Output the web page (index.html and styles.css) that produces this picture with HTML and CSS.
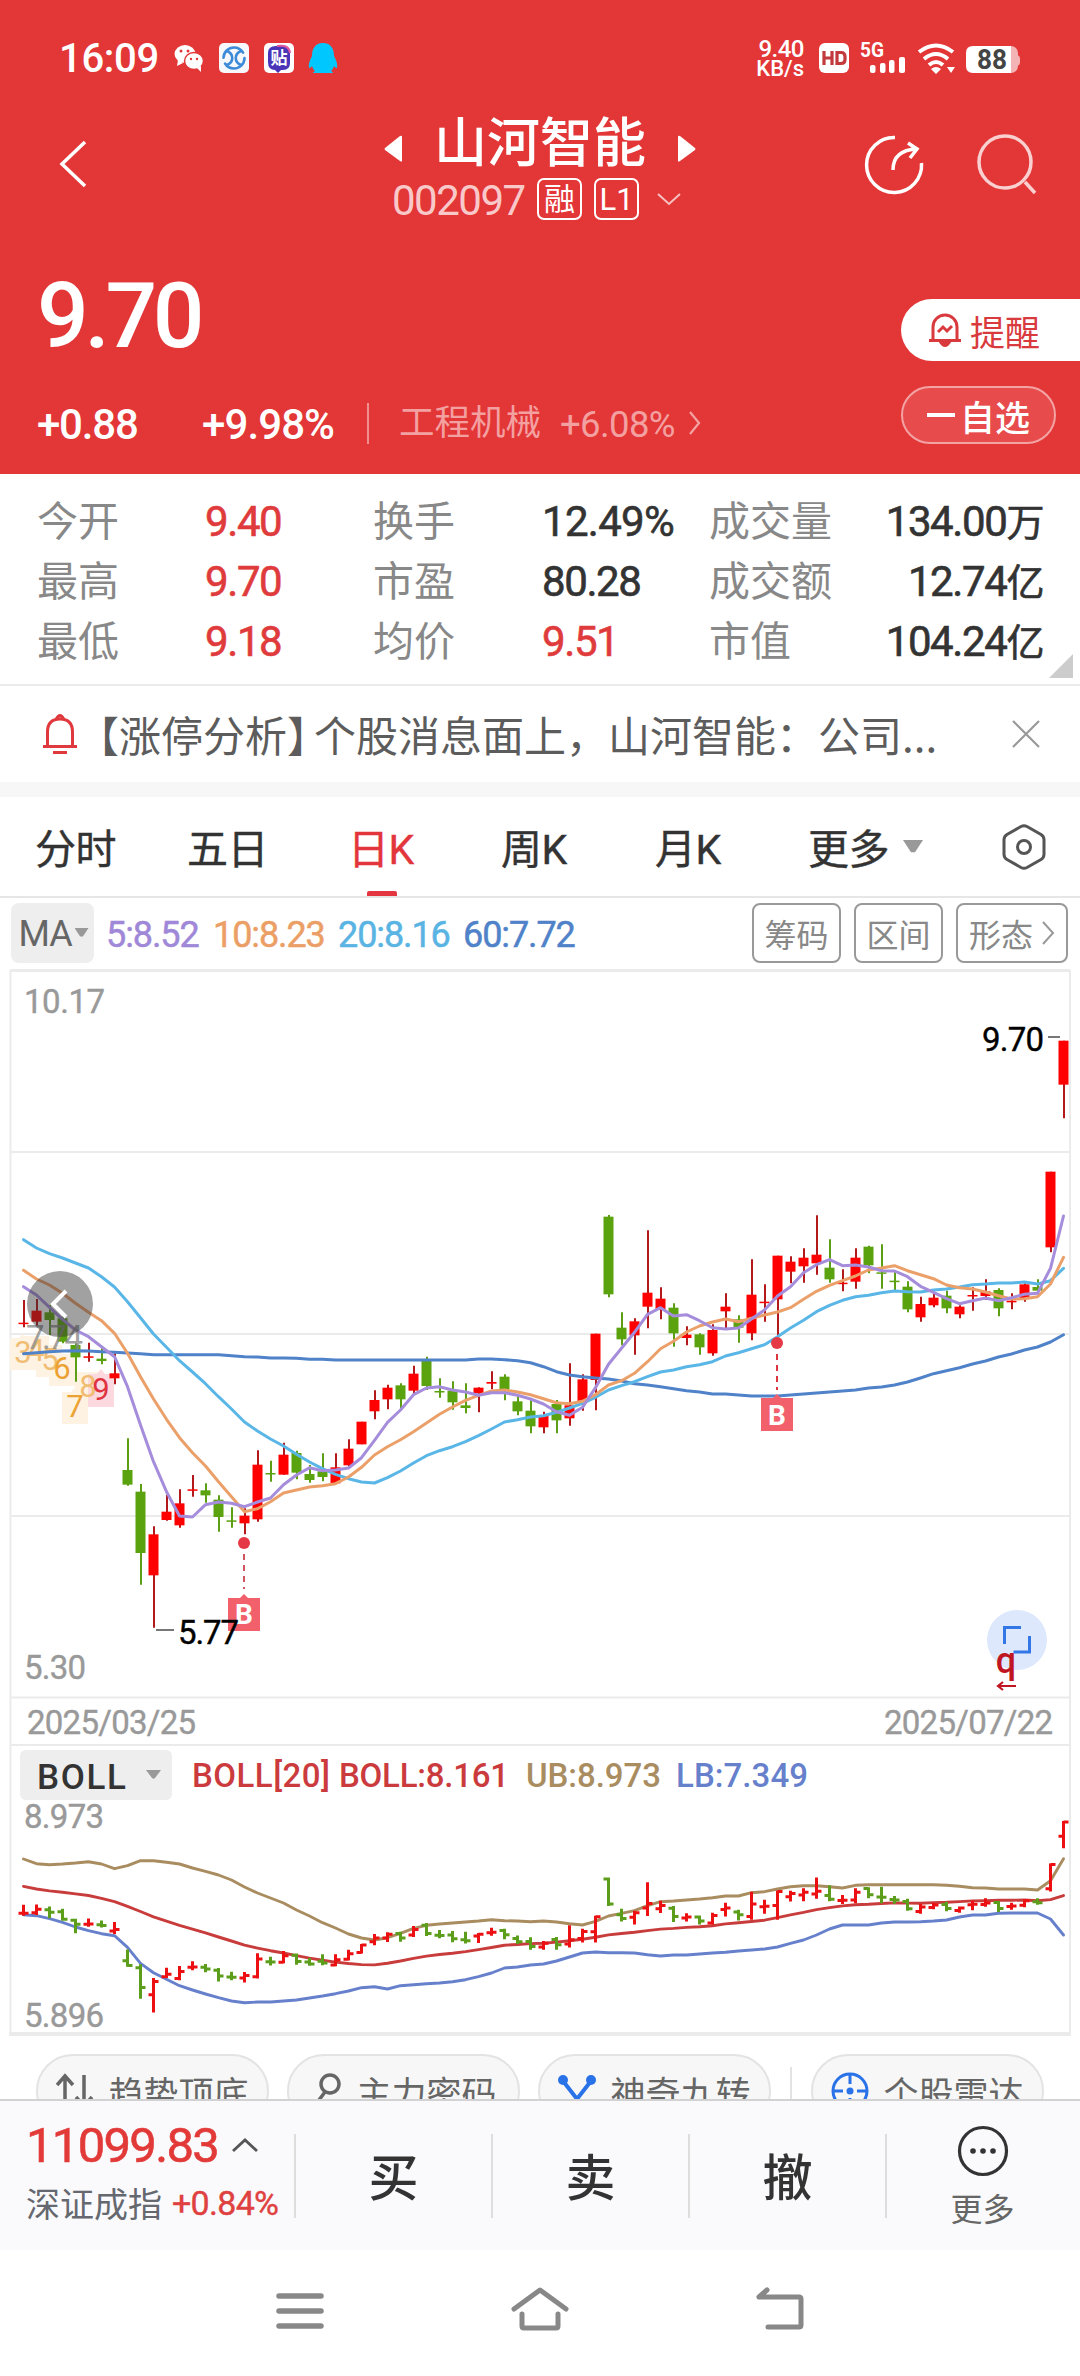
FILE: index.html
```html
<!DOCTYPE html>
<html lang="zh-CN">
<head>
<meta charset="utf-8">
<title>山河智能 002097</title>
<link rel="stylesheet" href="styles.css">
</head>
<body>
<header class="hero">
  <div class="status">
    <span class="clock">16:09</span>
    <svg class="apps" width="170" height="40" viewBox="170 38 170 40">
      <ellipse cx="185" cy="54" rx="10.500" ry="9" fill="#fff"/><path d="M178 60l-1 6 6-3z" fill="#fff"/>
      <ellipse cx="194" cy="61" rx="9.500" ry="8.500" fill="#fff" stroke="#e33637" stroke-width="1.500"/><path d="M197 68l4 4v-6z" fill="#fff"/>
      <g fill="#e33637"><circle cx="181" cy="51" r="1.500"/><circle cx="188" cy="51" r="1.500"/><circle cx="191" cy="59" r="1.200"/><circle cx="197" cy="59" r="1.200"/></g>
      <rect x="219" y="43" width="30" height="30" rx="5" fill="#f6f8fc"/>
      <g fill="none" stroke="#3d8bd8" stroke-width="2.600" stroke-linecap="round"><circle cx="234" cy="58" r="10.500" stroke-dasharray="27 6"/><path d="M227 51c7 3 7 11 0 14M241 51c-7 3-7 11 0 14"/></g>
      <rect x="264" y="43" width="30" height="30" rx="5" fill="#fff"/>
      <path d="M276 46h7q7 0 7 7v10q0 7-7 7h-2l-3 3-3-3q-7 0-7-8V53q0-7 8-7z" fill="#4a35b8"/><path d="M277 46q12-2 13 7" fill="none" stroke="#e0559f" stroke-width="2"/>
      <text x="279" y="64" class="tie">贴</text>
      <path d="M323 43c8 0 11 6 11 13 2 4 4 8 3 12-2 0-3-2-3-2-1 3-2 4-3 5 2 1 2 2 2 2h-20s0-1 2-2c-1-1-2-2-3-5 0 0-1 2-3 2-1-4 1-8 3-12 0-7 3-13 11-13z" fill="#00c8ff"/>
    </svg>
    <div class="speed"><span>9.40</span><span>KB/s</span></div>
    <svg class="signals" width="210" height="44" viewBox="815 36 210 44">
      <rect x="819" y="43" width="30" height="30" rx="6" fill="#fff"/>
      <g fill="none" stroke="#c23a3c" stroke-width="3.200"><path d="M824 51v14M832 51v14M824 58h8M837 52.500h4q4 0 4 4v3q0 4-4 4h-4z"/></g>
      <text x="860" y="57" class="fiveg" textLength="24" lengthAdjust="spacingAndGlyphs">5G</text>
      <g fill="#fff"><rect x="870" y="65" width="5.500" height="8" rx="2"/><rect x="880" y="63" width="5.500" height="10" rx="2"/><rect x="889" y="60" width="5.500" height="13" rx="2"/><rect x="899" y="57" width="6" height="16" rx="2"/></g>
      <g fill="none" stroke="#fff" stroke-width="4"><path d="M919 52q17-13 34 0M924 59q12-10 24 0M929 65q7-6 14 0"/></g>
      <path d="M931 69q5-4 10 0l-5 5zM947 67h8l-4 6z" fill="#fff"/>
      <path d="M1010 55h6q4 0 4 4v3q0 4-4 4h-6z" fill="#f4b3b4"/><rect x="990" y="46" width="28" height="27" rx="7" fill="#f4b3b4"/>
      <path d="M973 46h38v27h-38q-7 0-7-7v-13q0-7 7-7z" fill="#fff"/>
      <text x="977" y="69" class="batt" textLength="30" lengthAdjust="spacingAndGlyphs">88</text>
    </svg>
  </div>
  <div class="titlebar">
    <svg class="back" width="32" height="52" viewBox="0 0 32 52"><path d="M28 4L5 26l23 22" fill="none" stroke="#fff" stroke-width="3.500"/></svg>
    <div class="name">
      <div class="name-row">
        <svg width="18" height="28" viewBox="0 0 18 28"><path d="M18 2v24q0 1-2 0L1 15q-1-1 0-2L16 1q2-1 2 1z" fill="#fff"/></svg>
        <h1>山河智能</h1>
        <svg width="18" height="28" viewBox="0 0 18 28"><path d="M0 2v24q0 1 2 0l15-11q1-1 0-2L2 1Q0 0 0 2z" fill="#fff"/></svg>
      </div>
      <div class="code-row">
        <span class="code">002097</span><span class="badge">融</span><span class="badge">L1</span>
        <svg width="26" height="14" viewBox="0 0 26 14"><path d="M2 2l11 10L24 2" fill="none" stroke="#f7c0c1" stroke-width="2"/></svg>
      </div>
    </div>
    <svg class="tools" width="180" height="70" viewBox="860 130 180 70" fill="none">
      <path d="M895 137.500A27.500 27.500 0 1 0 921.500 163" stroke="#fff" stroke-width="3.500"/>
      <path d="M893 170q0-20 24-21M908 143l9 6-7 9" stroke="#fff" stroke-width="3.500"/>
      <circle cx="1005" cy="162" r="26" stroke="#f9cfcf" stroke-width="3.500"/><path d="M1025 182l10 11" stroke="#f9cfcf" stroke-width="3.500"/>
    </svg>
  </div>
  <div class="pricing">
    <div class="left">
      <div class="price">9.70</div>
      <div class="changes">
        <span class="chg">+0.88</span><span class="pct">+9.98%</span><i class="bar"></i>
        <span class="sector">工程机械</span><span class="sector-pct">+6.08%</span>
        <svg width="14" height="26" viewBox="0 0 14 26"><path d="M2 2l9 11-9 11" fill="none" stroke="#f3a3a4" stroke-width="2.200"/></svg>
      </div>
    </div>
    <div class="right">
      <div class="remind">
        <svg width="34" height="36" viewBox="0 0 34 36" fill="none" stroke="#d93a3d" stroke-width="3"><path d="M5 28V15a12 12 0 0 1 24 0v13M1 28.500h32"/><path d="M12 29q5 9 10 0" fill="#d93a3d"/><path d="M10 20l5-5 4 4 5-5"/></svg>
        <span>提醒</span>
      </div>
      <div class="watch"><i></i><span>自选</span></div>
    </div>
  </div>
</header>

<section class="quote">
  <span>今开</span><b class="up">9.40</b><span>换手</span><b class="turnover">12.49%</b><span>成交量</span><b class="end">134.00<em>万</em></b>
  <span>最高</span><b class="up">9.70</b><span>市盈</span><b>80.28</b><span>成交额</span><b class="end">12.74<em>亿</em></b>
  <span>最低</span><b class="up">9.18</b><span>均价</span><b class="up">9.51</b><span>市值</span><b class="end">104.24<em>亿</em></b>
  <i class="corner"></i>
</section>

<section class="notice">
  <svg width="34" height="42" viewBox="0 0 34 42" fill="none" stroke="#e0393d" stroke-width="3"><path d="M4.500 33V19q0-13 12.500-13t12.500 13v14M0 33.500h34M13 6.500q4-8 8 0"/><path d="M10 39.500h14"/></svg>
  <p>【涨停分析<span class="close-b">】</span>个股消息面上，山河智能：公司...</p>
  <svg class="x" width="30" height="30" viewBox="0 0 30 30"><path d="M2 2l26 26M28 2L2 28" stroke="#999" stroke-width="2.200"/></svg>
</section>

<nav class="tabs">
  <span>分时</span><span>五日</span><span class="on">日K</span><span>周K</span><span>月K</span><span>更多</span>
  <i class="tri"></i>
  <svg width="44" height="48" viewBox="0 0 44 48" fill="none" stroke="#555" stroke-width="3"><path d="M19 3.500q3-1.500 6 0l14 8q3 2 3 5v15q0 3-3 5l-14 8q-3 1.500-6 0l-14-8q-3-2-3-5v-15q0-3 3-5z"/><circle cx="22" cy="24" r="6.500"/></svg>
</nav>

<section class="ma">
  <div class="ma-btn">MA<i class="tri"></i></div>
  <span class="m5">5:8.52</span><span class="m10">10:8.23</span><span class="m20">20:8.16</span><span class="m60">60:7.72</span>
  <div class="ma-opts"><span>筹码</span><span>区间</span><span class="wide">形态<svg width="13" height="26" viewBox="0 0 13 26"><path d="M1 2l10 11L1 24" fill="none" stroke="#999" stroke-width="2"/></svg></span></div>
</section>

<svg class="chart" width="1080" height="1068" viewBox="0 968 1080 1068">
  <g fill="none" stroke="#ebebeb" stroke-width="2">
    <path d="M10 970.500h1060" stroke-width="3"/><path d="M10.500 970v1064M1070 970v1064M10 1152h1060M10 1334h1060M10 1516h1060M10 1697.500h1060M10 1745h1060"/><path d="M9 2034h1062" stroke-width="4"/>
  </g>
  <g class="axis">
    <text x="24" y="1013" textLength="81">10.17</text>
    <text x="24" y="1679" textLength="62">5.30</text>
    <text x="27" y="1734" textLength="169">2025/03/25</text>
    <text x="884" y="1734" textLength="169">2025/07/22</text>
    <text x="24" y="1828" textLength="80">8.973</text>
    <text x="24" y="2027" textLength="80">5.896</text>
  </g>
  <g class="tags">
    <g fill="#fef2e2"><path d="M10 1338l9 0 4-4 4 4h9v32H10zM23 1336h26v32H23zM36 1345h26v32H36zM49 1354h26v32H49zM62 1392h9l4-5 4 5h9v32H62zM75 1372h26v33H75z"/></g>
    <path d="M88 1374h9l4-5 4 5h9v33H88z" fill="#fbd9de"/>
    <g fill="#f0bd72"><text x="23" y="1363">3</text><text x="36" y="1361">4</text><text x="50" y="1370">5</text><text x="88" y="1397">8</text></g>
    <g fill="#eca233"><text x="62" y="1379">6</text><text x="75" y="1417">7</text></g>
    <text x="101" y="1400" fill="#e0333f">9</text>
  </g>
  <g id="candles"></g>
  <g id="averages" fill="none" stroke-width="3" stroke-linejoin="round" stroke-linecap="round"></g>
  <text x="26" y="1349" class="ghost" textLength="57">7.74</text>
  <circle cx="60" cy="1304" r="33" fill="#333" fill-opacity=".46"/>
  <path d="M66 1291l-13 13 13 13" fill="none" stroke="#fff" stroke-width="4"/>
  <g>
    <circle cx="244" cy="1543" r="6" fill="#e63946"/><path d="M244 1554v35" stroke="#cf5560" stroke-width="2" stroke-dasharray="6 5"/>
    <path d="M228 1598h12l4-4 4 4h12v33h-32z" fill="#f2606b"/><text x="244" y="1624" class="buy">B</text>
    <circle cx="777" cy="1343" r="6" fill="#e63946"/><path d="M777 1354v36" stroke="#dd3540" stroke-width="2" stroke-dasharray="6 5"/>
    <path d="M761 1398h12l4-4 4 4h12v33h-32z" fill="#f2606b"/><text x="777" y="1425" class="buy">B</text>
  </g>
  <g class="mark">
    <path d="M156 1630h18M1048 1037h12" stroke="#777" stroke-width="2"/>
    <text x="178" y="1644" textLength="61">5.77</text>
    <text x="982" y="1051" textLength="62">9.70</text>
  </g>
  <circle cx="1017" cy="1640" r="30" fill="#dde8fc"/>
  <path d="M1004.500 1644v-16.500h16.500M1029.500 1636v16h-16" fill="none" stroke="#3377e6" stroke-width="3"/>
  <text x="1006" y="1673" class="q">q</text>
  <path d="M1016 1686h-18M1003 1682l-5 4 5 4" fill="none" stroke="#c01622" stroke-width="2.200"/>
  <rect x="20" y="1750" width="152" height="50" rx="6" fill="#eee"/>
  <text x="37" y="1789" class="boll" textLength="89">BOLL</text>
  <path d="M146 1770h15l-6 8q-1.500 1.500-3 0z" fill="#999"/>
  <g class="legend">
    <text x="192" y="1787" fill="#cb3b3d" textLength="138">BOLL[20]</text>
    <text x="339" y="1787" fill="#cb3b3d" textLength="170">BOLL:8.161</text>
    <text x="526" y="1787" fill="#a98c5f" textLength="135">UB:8.973</text>
    <text x="676" y="1787" fill="#6680cc" textLength="132">LB:7.349</text>
  </g>
  <g id="bands" fill="none" stroke-width="2.900" stroke-linejoin="round" stroke-linecap="round"></g>
  <g id="bars" fill="none" stroke-width="3"></g>
</svg>

<section class="chips">
  <div class="chip"><svg width="38" height="36" viewBox="0 0 38 36" fill="none" stroke="#666" stroke-width="3.500"><path d="M9 34V4M1 12l8-9 8 9M28 2v30M20 24l8 9 8-9"/></svg>趋势顶底</div>
  <div class="chip"><svg width="32" height="38" viewBox="0 0 32 38" fill="none" stroke="#666" stroke-width="3.500"><circle cx="20" cy="12" r="9"/><path d="M15 20L3 36M9 28l5 4"/></svg>主力密码</div>
  <div class="chip"><svg width="38" height="36" viewBox="0 0 38 36" fill="none" stroke="#2a72e8" stroke-width="4"><path d="M5 8l14 18L33 8M19 24v10"/><g fill="#2a72e8" stroke="none"><circle cx="5" cy="7" r="5"/><circle cx="33" cy="7" r="5"/></g></svg>神奇九转</div>
  <i class="sep"></i>
  <div class="chip"><svg width="38" height="38" viewBox="0 0 38 38" fill="none" stroke="#2a72e8" stroke-width="3"><circle cx="19" cy="19" r="17"/><path d="M19 2v10M2 19h10M26 19h10M19 26v10"/><circle cx="19" cy="19" r="3.500" fill="#2a72e8" stroke="none"/></svg>个股雷达</div>
</section>

<footer class="trade">
  <div class="index">
    <div class="index-top"><span>11099.83</span><svg width="28" height="16" viewBox="0 0 28 16"><path d="M2 14L14 3l12 11" fill="none" stroke="#555" stroke-width="2.800"/></svg></div>
    <div class="index-sub"><span>深证成指</span><b>+0.84%</b></div>
  </div>
  <div class="act">买</div><div class="act">卖</div><div class="act">撤</div>
  <div class="more"><svg width="52" height="52" viewBox="0 0 52 52"><circle cx="26" cy="26" r="23.500" fill="none" stroke="#333" stroke-width="3.200"/><g fill="#333"><circle cx="16" cy="26" r="2.800"/><circle cx="26" cy="26" r="2.800"/><circle cx="36" cy="26" r="2.800"/></g></svg><span>更多</span></div>
</footer>

<div class="sysnav">
  <svg width="48" height="44" viewBox="0 0 48 44"><path d="M3 7h42M3 22h42M3 37h42" stroke="#888" stroke-width="5.500" stroke-linecap="round"/></svg>
  <svg width="60" height="46" viewBox="0 0 60 46" fill="none" stroke="#888" stroke-width="5" stroke-linecap="round" stroke-linejoin="round"><path d="M4 23L30 4l26 19M12 28v12q0 2 2 2h32q2 0 2-2V28"/></svg>
  <svg width="50" height="46" viewBox="0 0 50 46" fill="none" stroke="#888" stroke-width="5" stroke-linecap="round" stroke-linejoin="round"><path d="M12 4L4 11h40q2 0 2 2v26q0 2-2 2H13"/></svg>
</div>
<script src="chart.js"></script>
</body>
</html>
```
FILE: styles.css
```css
* { box-sizing: border-box; }
body { margin: 0; width: 1080px; background: #fff; color: #333; font-family: Roboto, "Noto Sans CJK SC", sans-serif; }
svg { display: block; flex: none; }
i { display: block; flex: none; }
b, em { font-weight: 500; font-style: normal; }
.hero { height: 474px; background: #e33637; color: #fff; }
.status { height: 100px; padding-top: 36px; display: flex; align-items: flex-start; }
.clock { width: 111px; margin: -1px 0 0 59px; font-size: 40px; line-height: 47px; font-weight: 500; letter-spacing: -.3px; }
.apps { margin-top: 2px; }
.tie { font-size: 17px; fill: #fff; text-anchor: middle; font-weight: 700; }
.speed { width: 60px; margin: 3px 0 0 415px; display: flex; flex-direction: column; align-items: flex-end; font-size: 22px; line-height: 20px; font-weight: 500; white-space: nowrap; padding-right: 11px; }
.speed span:first-child { font-size: 24px; letter-spacing: -.5px; }
.fiveg { font-size: 21px; font-weight: 700; fill: #fff; }
.batt { font-size: 27px; font-weight: 700; fill: #444; }
.titlebar { height: 140px; display: flex; align-items: flex-start; }
.back { margin: 38px 0 0 57px; }
.name { width: 312px; margin-left: 295px; }
.name-row { display: flex; align-items: center; justify-content: space-between; height: 78px; padding-top: 4px; }
h1 { margin: 0; font-size: 53px; line-height: 74px; font-weight: 500; }
.name-row h1 { margin-top: 5px; }
.name-row svg { margin-top: 15px; }
.code-row { display: flex; align-items: center; height: 42px; padding-left: 8px; }
.code { width: 145px; padding-top: 4px; font-size: 42px; line-height: 44px; letter-spacing: -1.5px; color: #f9c9ca; }
.badge { width: 45px; height: 42px; margin-right: 12px; border: 2px solid #fff; border-radius: 7px; font-size: 31px; line-height: 40px; text-align: center; }
.code-row svg { margin-left: 5px; }
.tools { margin: 30px 0 0 164px; }
.pricing { display: flex; justify-content: space-between; height: 234px; }
.left { padding: 31px 0 0 37px; }
.price { font-size: 91px; line-height: 90px; font-weight: 500; letter-spacing: -4.3px; }
.changes { display: flex; align-items: center; height: 50px; margin-top: 37px; font-size: 42px; line-height: 50px; white-space: nowrap; }
.chg { width: 165px; padding-top: 4px; font-weight: 500; letter-spacing: -1.2px; }
.pct { width: 165px; padding-top: 4px; font-weight: 500; letter-spacing: -.9px; }
.bar { width: 2px; height: 41px; margin-right: 30px; background: #ef8f90; }
.sector { width: 161px; font-size: 35.500px; color: #f3a0a1; }
.sector-pct { width: 128px; padding-top: 4px; font-size: 36.500px; color: #f3a0a1; letter-spacing: -.6px; }
.right { width: 179px; padding-top: 59px; }
.remind { display: flex; align-items: center; height: 62px; padding-left: 27px; background: #fff; border-radius: 31px 0 0 31px; color: #d93a3d; font-size: 35px; }
.remind span { margin-left: 8px; }
.watch { display: flex; align-items: center; justify-content: center; width: 155px; height: 58px; margin-top: 25px; border: 2px solid #f3a3a4; border-radius: 29px; background: #e74b4c; font-size: 35px; font-weight: 500; }
.watch i { width: 28px; height: 4px; margin-right: 5px; background: #fff; }
.quote { position: relative; display: grid; grid-template-columns: 168px 168px 169px 167px 160px 174px; grid-auto-rows: 60px; height: 210px; padding: 18px 0 0 37px; align-items: center; font-size: 41px; line-height: 60px; white-space: nowrap; }
.quote span { color: #888; }
.quote b { font-size: 42px; letter-spacing: -1.4px; font-weight: 400; -webkit-text-stroke: .6px currentColor; }
.quote .turnover { letter-spacing: -.7px; }
.quote .up { color: #df3b3c; }
.quote .end { justify-self: end; }
.quote em { font-size: 38px; font-weight: 400; }
.corner { position: absolute; right: 7px; top: 180px; width: 24px; height: 24px; background: #ccc; clip-path: polygon(100% 0, 100% 100%, 0 100%); }
.notice { display: flex; align-items: center; height: 113px; padding: 0 39px 0 43px; border-top: 2px solid #ebebeb; border-bottom: 15px solid #f7f7f7; }
.notice p { flex: 1; margin: 0; font-size: 42px; line-height: 60px; color: #5c5c5c; white-space: nowrap; font-family: "Noto Sans CJK SC", sans-serif; }
.close-b { margin-right: -15px; }
.tabs { display: flex; align-items: center; height: 101px; padding-left: 35px; border-bottom: 2px solid #e6e6e6; font-size: 41px; line-height: 99px; white-space: nowrap; }
.tabs span:nth-child(1) { width: 152px; }
.tabs span:nth-child(2) { width: 161px; }
.tabs span:nth-child(3) { width: 153px; position: relative; }
.tabs span:nth-child(4) { width: 154px; }
.tabs span:nth-child(5) { width: 153px; }
.tabs span:nth-child(6) { width: 95px; }
.tabs span { height: 99px; padding-top: 4px; letter-spacing: -.5px; -webkit-text-stroke: .4px currentColor; }
.tabs .on { color: #e3363c; }
.on::after { content: ""; position: absolute; left: 19px; bottom: 0; width: 30px; height: 5px; border-radius: 2px 2px 0 0; background: #e33640; }
.tri { width: 20px; height: 13px; background: #999; clip-path: polygon(0 0, 100% 0, 60% 95%, 40% 95%); }
.tabs svg { margin-left: 79px; }
.ma { display: flex; align-items: center; height: 70px; padding: 0 12px 0 11px; font-size: 36px; letter-spacing: -1.1px; white-space: nowrap; }
.ma > span { padding-top: 3px; -webkit-text-stroke: .5px currentColor; }
.ma-btn { display: flex; align-items: center; justify-content: center; width: 83px; height: 60px; margin-right: 12px; padding-left: 2px; border-radius: 8px; background: #eee; color: #666; line-height: 60px; padding-top: 2px; }
.ma-btn .tri { width: 14px; height: 9px; margin-left: 3px; margin-top: -3px; }
.m5 { width: 107px; color: #a088d8; }
.m10 { width: 125px; color: #eb9f66; }
.m20 { width: 125px; color: #59b4e3; }
.m60 { width: 120px; color: #4f82c8; }
.ma-opts { display: flex; gap: 13px; margin-left: auto; letter-spacing: 0; }
.ma-opts span { display: flex; align-items: center; justify-content: center; width: 89px; height: 60px; border: 2px solid #999; border-radius: 8px; color: #888; font-size: 32px; }
.ma-opts .wide { width: 112px; gap: 9px; }
.chart text { font-size: 33px; }
.chart .axis { fill: #999; stroke: #999; stroke-width: .4px; }
.chart .mark text { fill: #000; stroke: #000; stroke-width: .4px; }
.chart .legend text { font-size: 33px; font-weight: 500; }
.chart .tags text { font-size: 31px; text-anchor: middle; }
.chart .ghost { fill: #888; fill-opacity: .8; }
.chart .buy { font-size: 28px; font-weight: 700; fill: #fff; text-anchor: middle; }
.chart .q { font-size: 36px; font-weight: 500; fill: #c01622; text-anchor: middle; }
.chart .boll { font-size: 35px; font-weight: 500; fill: #333; }
.chips { display: flex; align-items: flex-start; height: 63px; padding: 18px 0 0 36px; overflow: hidden; }
.chip { display: flex; align-items: center; justify-content: center; gap: 14px; flex: none; width: 233px; height: 74px; margin-right: 18px; border: 2px solid #e3e3e3; border-radius: 37px; background: #f7f7f7; color: #666; font-size: 35px; white-space: nowrap; }
.sep { width: 2px; height: 60px; margin: 13px 19px 0 1px; background: #e3e3e3; }
.trade { display: flex; align-items: center; height: 151px; border-top: 2px solid #d2d2d4; background: #fafafc; }
.index { width: 294px; height: 149px; padding: 15px 0 0 26px; white-space: nowrap; }
.index-top { display: flex; align-items: center; height: 58px; font-size: 49px; line-height: 58px; color: #e23a39; letter-spacing: -1.7px; -webkit-text-stroke: .6px currentColor; }
.index-top span { padding-top: 2px; }
.index-top svg { margin-left: 13px; }
.index-sub { display: flex; align-items: center; height: 56px; color: #666870; font-size: 34px; }
.index-sub b { margin-left: 10px; padding-top: 2px; color: #df4040; letter-spacing: -.7px; font-weight: 400; -webkit-text-stroke: .4px currentColor; }
.act { width: 197px; height: 84px; border-left: 2px solid #ddd; font-size: 50px; line-height: 90px; font-weight: 500; text-align: center; }
.more { display: flex; flex-direction: column; align-items: center; width: 195px; height: 120px; color: #666; font-size: 32px; line-height: 46px; position: relative; }
.more::before { content: ""; position: absolute; left: 0; top: 18px; width: 2px; height: 84px; background: #ddd; }
.more svg { margin: 9px 0 10px; }
.sysnav { display: flex; align-items: flex-start; height: 126px; padding: 36px 275px 0 276px; justify-content: space-between; }
.sysnav svg:first-child { margin-top: 3px; }
```
FILE: chart.js
```js
// Rows are [direction, high, body top, body bottom, low], in thirds of a pixel below the segment's base line.
const segments = [
  { base: 1180, rows: [
    'R',360,428,430,442,'R',357,392,425,437,'G',375,397,420,465,'G',397,415,485,490,'G',490,495,532,605,'R',488,529,532,545,'G',505,536,543,553,
    'R',520,580,595,613,'G',775,870,914,917,'G',912,935,1119,1214,'R',1039,1063,1186,1343,'R',945,995,1020,1022,'R',928,970,1036,1043,
    'R',885,928,931,950,'G',910,931,946,968,'G',946,959,1011,1055,'G',982,1021,1024,1043,'R',985,1007,1030,1063,'R',811,854,1018,1025,
    'G',842,879,882,905,'R',788,824,884,884,'G',812,819,878,898,'G',855,882,900,908,'G',820,874,891,904,'R',820,862,910,912,
    'R',778,806,856,858,'R',725,725,793,793,'R',631,660,694,718,'R',614,623,658,688,'G',610,616,658,685,'R',557,581,632,640,
    'G',530,540,618,630,'G',595,633,636,653,'G',604,632,667,689,'G',610,676,684,700,'R',622,623,640,697,'R',574,606,611,628,
    'G',583,590,628,661,'G',645,664,694,706,'G',661,692,739,760,'R',695,708,742,760,'G',660,672,721,760,'R',550,676,715,737,
    'R',583,598,664,692,'R',461,461,600,691,'G',105,110,343,352,'G',397,443,478,496,'R',415,424,466,524,'R',151,338,380,445,
    'R',322,356,388,418,'G',370,383,460,500,'R',439,464,474,496,'G',460,463,502,524] },
  { base: 1000, rows: [
    'R',973,990,1060,1067,'R',880,920,934,990,'G',946,958,983,1028,'R',778,884,1000,1021,'R',853,905,909,965,'R',767,767,898,1020,
    'R',769,785,815,850,'R',745,773,799,848,'R',646,764,790,824,'G',718,803,838,848,'R',808,848,851,874,'R',745,773,845,866,
    'G',737,740,796,820,'G',733,817,821,866,'G',817,842,845,872,'G',844,860,928,937,'R',890,912,952,965,'R',880,893,916,922,
    'G',872,887,925,940,'R',916,920,943,955,'R',862,885,889,932,'R',838,874,888,900,'G',865,870,925,949,'R',880,902,907,928,
    'R',850,853,895,905,'G',838,861,872,880,'R',515,515,742,757,'R',122,122,254,355] }
];
const x = i => 23.5 + 13 * i;
const candles = [];
for (const s of segments)
  for (let i = 0; i < s.rows.length; i += 5)
    candles.push([s.rows[i], ...s.rows.slice(i + 1, i + 5).map(v => s.base + v / 3)]);

document.getElementById('candles').innerHTML = candles.map(([c, h, t, b, l], i) => {
  const up = c === 'R', hgt = Math.max(b - t, 1.5);
  return `<path d="M${x(i) + .5} ${h}V${l}" stroke="${up ? '#b3181b' : '#5c9e14'}" stroke-width="2"/>` +
    `<rect x="${x(i) - 5}" y="${t}" width="10" height="${hgt}" fill="${up ? '#ff0000' : '#5ba30e'}"/>`;
}).join('');

const join = (first, a, second, b) => a.map(v => first + v / 3).concat(b.map(v => second + v / 3));
const line = (ys, color) => `<polyline stroke="${color}" points="${ys.map((y, i) => x(i) + ',' + y.toFixed(1)).join(' ')}"/>`;

const ma60 = join(1180, [521,518,515,513,512,513,515,517,519,521,524,524,524,524,524,524,527,530,531,534,534,535,538,538,540,540,540,540,540,540,540,540,540,540,540,537,537,539,542,548,560,575,585,590,594,597,603,611,615,620,626,632,636],
  1000, [1182,1182,1185,1188,1188,1188,1185,1182,1179,1176,1173,1170,1164,1161,1155,1146,1134,1121,1112,1103,1092,1083,1071,1062,1050,1041,1026,1004]);
const ma20 = join(1180, [179,204,221,234,249,264,290,321,365,413,462,502,542,576,611,650,687,726,753,777,798,823,846,866,883,896,906,909,893,873,849,827,812,800,785,767,747,726,719,711,707,697,684,670,652,630,617,605,590,576,570,560,554],
  1000, [1085,1068,1058,1046,1034,1010,984,961,935,916,901,890,886,878,873,875,876,870,867,861,854,852,849,849,846,852,842,805]);
const ma10 = join(1180, [271,297,315,340,370,397,422,460,520,590,657,718,773,818,858,905,950,995,986,965,939,930,921,917,911,891,862,825,800,779,755,729,703,681,661,646,633,630,636,644,656,668,671,664,644,615,602,580,545,506,484,456,438],
  1000, [966,957,965,955,945,936,923,898,874,856,842,828,810,804,797,812,824,836,855,863,867,876,887,897,896,890,852,772]);
const ma5 = join(1180, [320,345,382,418,450,470,500,530,620,735,845,935,1008,1011,974,966,970,980,966,954,914,885,863,872,870,864,833,781,727,690,644,624,620,630,636,646,638,638,646,657,672,695,706,682,623,553,505,457,403,383,408,404,422],
  1000, [983,987,984,957,930,888,860,818,794,779,797,795,801,812,813,830,859,877,896,911,902,894,902,893,883,880,805,648]);
document.getElementById('averages').innerHTML =
  line(ma60, '#4f82c8') + line(ma20, '#59b6e6') + line(ma10, '#eba06a') + line(ma5, '#a58ddb');

const upper = join(1680, [537,551,554,552,549,545,552,566,557,542,542,547,552,564,574,585,600,621,639,654,669,690,708,728,744,762,774,780,773,760,745,736,732,729,726,723,719,722,723,725],
  1560, [1083,1086,1091,1095,1084,1068,1060,1052,1037,1025,1023,1020,1017,1013,1008,1008,998,995,987,980,977,977,980,984,976,974,974,974,974,974,974,976,979,983,984,987,987,987,990,962,896]);
const lower = join(1680, [704,707,716,727,741,752,761,767,802,850,878,898,917,930,942,953,963,968,966,966,963,960,954,948,941,933,923,920,927,917,914,911,909,905,899,890,879,864,861,855],
  1560, [1212,1203,1191,1179,1176,1178,1178,1179,1184,1188,1185,1185,1182,1179,1177,1173,1170,1167,1161,1150,1140,1125,1107,1095,1095,1095,1089,1086,1086,1085,1083,1080,1071,1065,1065,1060,1059,1059,1059,1077,1125]);
// The lower pane shows the same prices on a flatter scale.
const pane = y => 1822 + (y - 1040.3) * .3228;
document.getElementById('bands').innerHTML =
  line(upper, '#a98c5f') + line(ma20.map(pane), '#c83c3c') + line(lower, '#6680cc');
document.getElementById('bars').innerHTML = candles.map(([c, h, t, b, l], i) => {
  const up = c === 'R', open = pane(up ? b : t), close = pane(up ? t : b);
  return `<path stroke="${up ? '#ec1012' : '#5c9e1c'}" d="M${x(i)} ${pane(h) - 1}V${pane(l) + 1}M${x(i) - 5} ${open}H${x(i)}M${x(i)} ${close}H${x(i) + 5}"/>`;
}).join('');
```
